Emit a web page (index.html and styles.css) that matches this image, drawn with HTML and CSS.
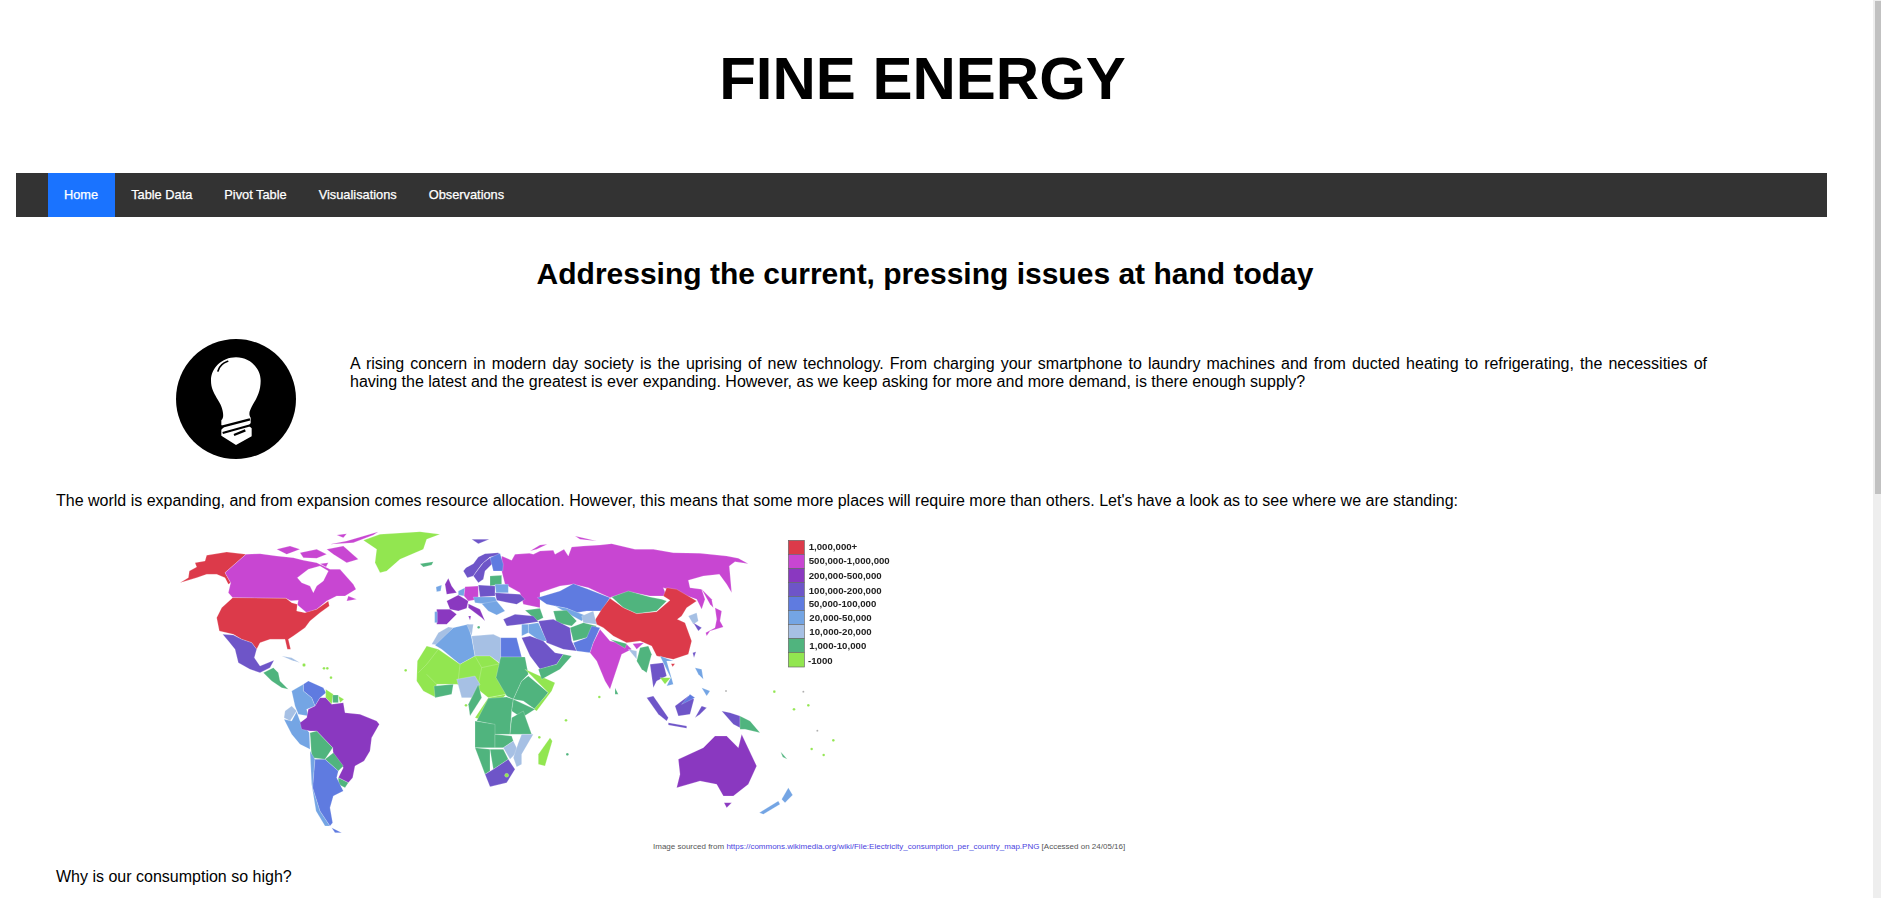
FILE: index.html
```html
<!DOCTYPE html>
<html lang="en">
<head>
  <meta charset="UTF-8">
  <title>Fine Energy</title>
  <link rel="stylesheet" href="styles.css">
</head>
<body>
<div id="wrapper">
  <h1 id="title">FINE ENERGY</h1>

  <ul id="nav">
    <li><a class="active" href="#">Home</a></li>
    <li><a href="#">Table Data</a></li>
    <li><a href="#">Pivot Table</a></li>
    <li><a href="#">Visualisations</a></li>
    <li><a href="#">Observations</a></li>
  </ul>

  <div id="content">
    <h2 id="subtitle">Addressing the current, pressing issues at hand today</h2>

    <div id="intro">
      <svg id="bulb" viewBox="48 40 360 360" aria-label="light bulb icon">
        <circle cx="228" cy="220" r="180" fill="#000"/>
        <path fill="#fff" d="M228 95C185 95 153 128 153 165C153 208 186 225 189 262C190 272 190 278 184 284L184 298L192 304L184 312L184 330L228 358L275 332L275 308L266 300L272 292L272 276C266 268 268 258 272 250C280 230 302 208 302 165C302 128 270 95 228 95Z"/>
        <path fill="none" stroke="#000" stroke-width="5" stroke-linecap="round" d="M174 136C178 122 188 112 203 107"/>
        <path fill="none" stroke="#000" stroke-width="7" d="M186 303L270 281M188 322L274 298M222 328L256 314"/>
      </svg>
      <p id="intro-text">A rising concern in modern day society is the uprising of new technology. From charging your smartphone to laundry machines and from ducted heating to refrigerating, the necessities of having the latest and the greatest is ever expanding. However, as we keep asking for more and more demand, is there enough supply?</p>
    </div>

    <p class="para">The world is expanding, and from expansion comes resource allocation. However, this means that some more places will require more than others. Let's have a look as to see where we are standing:</p>

    <svg id="map" viewBox="0 0 2250 960" aria-label="Electricity consumption per country map">
      <!-- americas and africa -->
      <g stroke="#fff" stroke-opacity="0.4" stroke-width="1.5" stroke-linejoin="round">
        <polygon class="red" points="60,185 85,170 88,150 110,138 105,125 135,120 140,103 200,93 258,100 195,155 212,185 205,190 195,170 170,160 140,160 110,170"/>
        <polygon class="mag" points="258,100 300,98 350,105 400,110 430,118 470,125 510,145 540,145 580,190 588,205 555,225 530,225 500,240 470,265 440,275 410,250 378,232 218,230 205,215 212,185 195,155"/>
        <polygon class="white" points="412,170 445,145 480,135 505,150 490,180 470,195 460,215 450,195 425,185"/>
        <polygon class="white" points="385,240 415,238 410,262 392,275 385,262"/>
        <polygon class="mag" points="350,85 390,75 420,85 380,100"/>
        <polygon class="mag" points="420,95 470,85 500,100 470,112 430,110"/>
        <polygon class="mag" points="510,70 560,60 655,32 640,42 580,65"/>
        <polygon class="mag" points="500,85 550,75 595,115 560,125 520,100"/>
        <polygon class="mag" points="530,42 560,38 550,50"/>
        <polygon class="mag" points="480,128 505,125 498,138"/>
        <polygon class="mag" points="565,225 590,235 560,240"/>
        <polygon class="red" points="218,230 378,232 395,245 412,250 410,270 435,275 470,265 505,240 508,255 480,275 450,300 435,320 400,345 385,355 392,385 382,385 375,355 330,355 300,365 290,385 275,365 245,355 220,340 178,330 170,290 185,260"/>
        <polygon class="ind" points="188,340 220,342 245,355 275,365 290,385 283,410 300,435 342,418 330,440 300,455 270,445 235,425 225,385 205,360"/>
        <polygon class="grn" points="310,455 340,440 355,455 360,480 385,505 365,500 335,480"/>
        <polygon class="pal" points="365,405 395,410 420,425 395,418"/>
        <polygon class="blu" points="430,490 445,480 490,500 498,515 480,530 465,555 455,530 430,510"/>
        <polygon class="lbl" points="395,510 430,490 430,510 455,530 465,555 440,565 445,585 415,580 405,555"/>
        <polygon class="pal" points="375,570 395,555 410,570 390,600 372,590"/>
        <polygon class="lbl" points="372,595 395,600 410,572 420,600 448,635 450,685 420,670 395,640"/>
        <polygon class="lim" points="497,505 520,520 515,550 497,530"/>
        <polygon class="grn" points="518,522 535,522 535,545 518,545"/>
        <polygon class="lim" points="535,525 552,535 540,545"/>
        <polygon class="pur" points="465,555 480,530 497,530 515,550 550,545 555,575 600,580 650,600 658,610 635,650 630,690 612,720 585,735 578,770 565,785 535,770 550,740 520,700 518,680 470,630 450,630 425,625 420,605 440,590 445,565"/>
        <polygon class="grn" points="450,635 470,630 518,680 495,715 455,710"/>
        <polygon class="grn" points="495,715 520,695 550,735 535,750"/>
        <polygon class="grn" points="535,770 565,785 555,800 535,790"/>
        <polygon class="lbl" points="450,690 465,715 458,800 480,870 510,915 495,915 468,870 455,790"/>
        <polygon class="blu" points="465,715 495,715 535,750 530,770 550,810 520,825 510,860 518,905 510,915 480,870 458,800"/>
        <polygon class="blu" points="515,920 545,935 525,935"/>
        <polygon class="lim" points="610,58 660,40 780,32 840,40 800,55 790,85 720,115 680,150 660,155 645,125 650,85"/>
        <polygon class="grn" points="780,128 820,122 815,132 790,138"/>

        <polygon class="pal" points="815,370 835,335 865,318 880,320 835,372"/>
        <polygon class="lbl" points="825,373 880,320 925,310 935,350 945,405 900,430 845,385"/>
        <polygon class="pal" points="920,310 940,310 935,345"/>
        <polygon class="pal" points="935,345 1000,340 1022,350 1022,428 990,405 945,405"/>
        <polygon class="blu" points="1022,350 1070,350 1085,408 1022,408"/>
        <polygon class="lim" points="772,420 800,375 835,385 900,430 945,405 990,405 1020,428 1022,470 1040,520 985,530 960,510 890,490 830,490 825,528 790,510 770,480"/>
        <polyline class="border" points="835,385 800,430 775,455"/>
        <polyline class="border" points="900,430 895,475"/>
        <polyline class="border" points="945,405 965,440 955,490"/>
        <polyline class="border" points="1020,428 965,440"/>
        <polyline class="border" points="800,460 830,490"/>
        <polygon class="pal" points="890,475 945,465 960,490 935,530 905,530"/>
        <polygon class="grn" points="822,495 880,490 875,520 825,530"/>
        <polygon class="grn" points="955,490 965,530 930,585 925,550"/>
        <polygon class="lim" points="985,530 1040,520 960,595 945,590 965,560"/>
        <polygon class="grn" points="1022,408 1095,408 1105,460 1085,480 1060,535 1040,525 1008,470"/>
        <polygon class="grn" points="1085,480 1105,465 1165,515 1125,565 1090,540 1060,535"/>
        <polygon class="lim" points="1095,445 1185,485 1175,510 1130,570 1122,565 1165,515"/>
        <polygon class="grn" points="985,532 1040,528 1060,535 1055,570 1050,640 1000,640 1000,610 950,600"/>
        <polygon class="grn" points="1060,535 1125,565 1085,590 1055,570"/>
        <polygon class="grn" points="1055,590 1090,570 1115,640 1050,640"/>
        <polygon class="grn" points="945,600 1005,610 1005,680 945,680"/>
        <polygon class="grn" points="1005,640 1055,645 1060,660 1030,680 1005,680"/>
        <polygon class="grn" points="945,680 990,685 990,750 975,760"/>
        <polygon class="grn" points="990,685 1030,685 1045,715 1000,745"/>
        <polygon class="pal" points="1030,680 1060,660 1075,690 1050,715"/>
        <polygon class="pal" points="1085,640 1120,640 1085,700 1085,730 1070,738 1060,710 1075,665"/>
        <polygon class="ind" points="975,760 1000,745 1045,715 1065,745 1040,785 990,797"/>
        <polygon class="lim" points="1170,650 1177,660 1155,735 1135,730 1135,700"/>
        <circle class="lim" cx="737" cy="448" r="4"/>
        <circle class="lim" cx="918" cy="553" r="4"/>
        <circle class="lim" cx="1138" cy="649" r="4"/>
        <circle class="lim" cx="492" cy="442" r="4"/>
        <circle class="lim" cx="502" cy="442" r="4"/>
        <circle class="lim" cx="513" cy="470" r="4"/>
        <circle class="lim" cx="432" cy="432" r="5"/>
        <circle class="lim" cx="1040" cy="763" r="6"/>
      </g>
      <!-- europe, asia, oceania -->
      <g transform="translate(840 0)" stroke="#fff" stroke-opacity="0.4" stroke-width="1.5" stroke-linejoin="round">
        <polygon class="mag" points="185,105 215,118 225,100 268,97 280,100 300,90 340,88 345,100 372,85 385,105 395,78 430,75 480,72 515,68 585,85 640,85 700,95 780,97 860,105 895,112 925,128 885,122 868,135 875,215 860,190 838,160 790,165 745,178 750,200 785,205 795,235 785,265 770,235 670,200 680,225 630,225 565,212 510,230 445,200 400,190 360,195 300,215 300,260 250,250 240,215 195,190 185,150"/>
        <polygon class="mag" points="270,90 300,72 322,70 290,85"/>
        <polygon class="mag" points="405,45 470,60 420,55"/>
        <polygon class="ind" points="95,55 148,55 115,68"/>
        <polygon class="blu" points="292,230 360,210 400,188 445,205 510,230 485,270 440,270 410,275 380,262 345,255 320,250"/>
        <polygon class="grn" points="515,228 565,210 630,228 665,235 680,240 650,270 590,278 550,260"/>
        <polygon class="red" points="460,305 485,265 510,232 550,260 590,278 650,272 690,238 670,225 680,200 710,205 770,240 740,260 725,285 712,295 735,305 755,360 745,400 700,415 650,405 635,375 600,360 560,365 520,345 490,320"/>
        <polygon class="pal" points="745,285 770,275 775,300 760,310"/>
        <polygon class="ind" points="760,305 785,320 775,330"/>
        <polygon class="mag" points="825,260 845,270 840,300 850,318 810,330 800,345 797,335 825,320 830,295"/>
        <polygon class="mag" points="785,205 815,235 820,260 810,250"/>
        <polygon class="grn" points="255,268 300,262 310,290 290,300 275,285"/>
        <polygon class="lbl" points="345,255 380,262 440,285 425,300 380,275"/>
        <polygon class="pal" points="425,285 460,270 470,310 430,305"/>
        <polygon class="grn" points="340,270 380,268 410,300 395,315 350,305"/>
        <polygon class="grn" points="390,320 430,305 470,315 440,350 400,360"/>
        <polygon class="ind" points="295,300 340,295 390,320 395,360 410,390 370,385 320,365"/>
        <polygon class="blu" points="400,365 440,350 455,315 480,320 460,365 450,395 410,390"/>
        <polygon class="ind" points="190,295 225,280 280,285 295,302 245,310 200,315"/>
        <polygon class="lbl" points="265,310 295,305 320,360 300,360 265,335"/>
        <polygon class="lbl" points="245,310 265,310 265,335 245,345"/>
        <polygon class="ind" points="245,350 270,345 310,360 345,395 370,400 350,430 300,445 270,405"/>
        <polygon class="grn" points="295,445 350,430 370,400 395,405 360,445 305,475"/>
        <polygon class="mag" points="450,395 460,365 480,325 510,360 560,370 575,385 545,400 510,505 495,480 470,420"/>
        <polygon class="grn" points="510,355 560,368 555,382"/>
        <polygon class="mag" points="578,368 612,365 590,385"/>
        <polygon class="pal" points="565,385 590,390 590,415"/>
        <polygon class="grn" points="600,380 625,375 635,400 620,455 605,445 590,420"/>
        <polygon class="ind" points="630,430 670,425 680,465 650,480 640,500"/>
        <polygon class="lbl" points="660,405 700,420 680,420 700,490 680,495 692,470 670,425"/>
        <polygon class="lim" points="660,470 692,470 675,490"/>
        <polygon class="grn" points="525,500 535,520 525,520"/>
        <polygon class="ind" points="620,530 640,525 685,590 680,600 655,580"/>
        <polygon class="ind" points="685,605 740,615 740,622 685,612"/>
        <polygon class="ind" points="705,555 745,525 762,535 750,580 715,585"/>
        <polygon class="blu" points="725,550 750,520 765,530"/>
        <polygon class="ind" points="765,590 785,555 800,560 780,580"/>
        <polygon class="ind" points="845,570 870,575 900,585 900,620 880,610"/>
        <polygon class="grn" points="900,585 930,600 960,635 915,625 900,625"/>
        <polygon class="lbl" points="765,440 785,445 790,475 775,460"/>
        <polygon class="lbl" points="785,500 810,510 800,525"/>
        <polygon class="red" points="693,428 705,428 698,437"/>
        <polygon class="ind" points="758,395 768,392 762,410"/>
        <polygon class="pur" points="715,715 790,680 825,645 860,645 895,680 905,640 950,735 925,790 880,825 850,825 830,790 780,780 710,800 720,760"/>
        <polygon class="pur" points="852,845 875,845 860,860"/>
        <polygon class="lbl" points="958,875 1015,840 1020,850 970,880"/>
        <polygon class="lbl" points="1025,835 1045,800 1058,822 1035,845"/>
        <polygon class="grn" points="1022,692 1042,715 1028,708"/>
        <circle class="lim" cx="1003" cy="512" r="4"/>
        <circle class="lim" cx="1062" cy="565" r="4"/>
        <circle class="lim" cx="1105" cy="553" r="4"/>
        <circle class="lim" cx="1180" cy="658" r="4"/>
        <circle class="lim" cx="1151" cy="702" r="4"/>
        <circle class="lim" cx="1115" cy="684" r="4"/>
        <circle class="lim" cx="478" cy="528" r="4"/>
        <circle class="lim" cx="378" cy="598" r="4"/>
        <circle class="grn" cx="382" cy="700" r="4"/>
        <circle class="gry" cx="858" cy="510" r="3"/>
        <circle class="gry" cx="1090" cy="512" r="3"/>
        <circle class="gry" cx="1132" cy="629" r="3"/>

        <polygon class="ind" points="70,150 78,140 100,128 115,108 135,98 175,95 180,103 150,108 125,130 110,150 100,165 82,170"/>
        <polygon class="ind" points="100,165 115,145 130,125 150,110 160,125 135,150 130,175 115,185"/>
        <polygon class="blu" points="150,110 180,97 190,130 188,150 160,150 155,130"/>
        <polygon class="grn" points="150,165 185,163 185,190 150,195"/>
        <polygon class="pur" points="15,190 25,172 35,195 50,215 20,220"/>
        <polygon class="lbl" points="-12,198 5,192 2,210 -10,212"/>
        <polygon class="pur" points="20,240 55,222 85,240 80,262 55,270 30,265"/>
        <polygon class="lbl" points="55,210 75,200 72,225 55,222"/>
        <polygon class="mag" points="75,197 115,195 115,235 85,240 72,225"/>
        <polygon class="pur" points="-10,265 30,265 50,280 20,310 -10,310"/>
        <polygon class="lbl" points="-16,272 -8,272 -8,305 -16,305"/>
        <polygon class="ind" points="115,192 165,195 165,225 120,228"/>
        <polygon class="ind" points="165,215 240,220 255,235 230,250 170,238"/>
        <polygon class="lbl" points="165,190 205,190 205,215 168,215"/>
        <polygon class="lbl" points="100,228 165,228 170,240 160,252 105,245"/>
        <polygon class="lbl" points="125,248 170,240 195,270 170,282 145,270"/>
        <polygon class="pur" points="85,248 120,265 135,300 125,290 85,260"/>
        <polygon class="pur" points="85,285 93,285 90,298"/>
        <circle class="grn" cx="116" cy="319" r="4"/>
      </g>
      <!-- legend -->
      <g transform="translate(1885 58)">
        <rect class="red leg" width="48" height="42"/>
        <rect class="mag leg" y="42" width="48" height="42"/>
        <rect class="pur leg" y="84" width="48" height="42"/>
        <rect class="ind leg" y="126" width="48" height="42"/>
        <rect class="blu leg" y="168" width="48" height="42"/>
        <rect class="lbl leg" y="210" width="48" height="42"/>
        <rect class="pal leg" y="252" width="48" height="42"/>
        <rect class="grn leg" y="294" width="48" height="42"/>
        <rect class="lim leg" y="336" width="48" height="44"/>
        <text class="leg-text" x="61" y="30">1,000,000+</text>
        <text class="leg-text" x="61" y="72">500,000-1,000,000</text>
        <text class="leg-text" x="61" y="115">200,000-500,000</text>
        <text class="leg-text" x="61" y="161">100,000-200,000</text>
        <text class="leg-text" x="61" y="201">50,000-100,000</text>
        <text class="leg-text" x="63" y="243">20,000-50,000</text>
        <text class="leg-text" x="63" y="285">10,000-20,000</text>
        <text class="leg-text" x="63" y="326">1,000-10,000</text>
        <text class="leg-text" x="59" y="372">-1000</text>
      </g>
    </svg>

    <p class="source">Image sourced from <a href="#">https://commons.wikimedia.org/wiki/File:Electricity_consumption_per_country_map.PNG</a> [Accessed on 24/05/16]</p>

    <p class="para">Why is our consumption so high?</p>
  </div>
</div>

<div id="scrollbar"><div id="scrollbar-thumb"></div></div>
</body>
</html>
```

FILE: styles.css
```css
body {
  margin: 0;
  background-color: white;
  font-family: "Liberation Sans", Arial, sans-serif;
  color: black;
}
#wrapper {
  width: 1811px;
  margin-left: 16px;
}
#title {
  margin: 0;
  padding: 44px 0 0 2px;
  height: 173px;
  box-sizing: border-box;
  text-align: center;
  font-size: 60px;
  line-height: 69px;
  font-weight: bold;
}
#nav {
  display: flex;
  list-style: none;
  margin: 0;
  padding: 0 0 0 32px;
  height: 44px;
  background-color: #333333;
}
#nav a {
  display: block;
  padding: 0 16px;
  line-height: 44px;
  font-size: 12.8px;
  color: white;
  text-decoration: none;
  -webkit-text-stroke: 0.25px white;
}
#nav a.active {
  padding-right: 17px;
  background-color: #1a73ff;
}
#content {
  padding: 0 40px;
}
#subtitle {
  margin: 0;
  padding: 39px 0 0 7px;
  text-align: center;
  font-size: 30px;
  line-height: 35px;
  font-weight: bold;
}
#intro {
  display: flex;
  margin-top: 48px;
  padding-left: 120px;
}
#bulb {
  width: 120px;
  height: 120px;
  flex: none;
}
#intro-text {
  margin: 16px 0 0 54px;
  width: 1357px;
  font-size: 16px;
  line-height: 18px;
  text-align: justify;
}
.para {
  margin: 0;
  font-size: 16px;
  line-height: 18px;
}
#intro + .para {
  margin-top: 33px;
}
#map {
  display: block;
  width: 750px;
  height: 320px;
  margin: 11px 0 0 104px;
  filter: blur(0.35px);
}
.source {
  margin: 0;
  padding-left: 597px;
  font-size: 8px;
  line-height: 12px;
  color: #555555;
}
.source a {
  color: #4a3fe0;
  text-decoration: none;
}
.source + .para {
  margin-top: 15px;
}
#scrollbar {
  position: fixed;
  top: 0;
  right: 0;
  bottom: 0;
  width: 8px;
  background-color: #eeeeee;
}
#scrollbar-thumb {
  position: absolute;
  top: 1px;
  right: 0;
  width: 6px;
  height: 493px;
  background-color: #c1c1c1;
}
.red { fill: #dc3a4a; }
.mag { fill: #c846d2; }
.pur { fill: #8a38c0; }
.ind { fill: #6e55c8; }
.blu { fill: #5f7be0; }
.lbl { fill: #74a5e4; }
.pal { fill: #a6c0e4; }
.grn { fill: #50b47e; }
.lim { fill: #92e650; }
.gry { fill: #aaaaaa; }
.white { fill: white; }
.border { fill: none; }
.leg {
  stroke: #666666;
  stroke-width: 2;
}
.leg-text {
  font-size: 29px;
  font-weight: bold;
  fill: #222222;
}
```
